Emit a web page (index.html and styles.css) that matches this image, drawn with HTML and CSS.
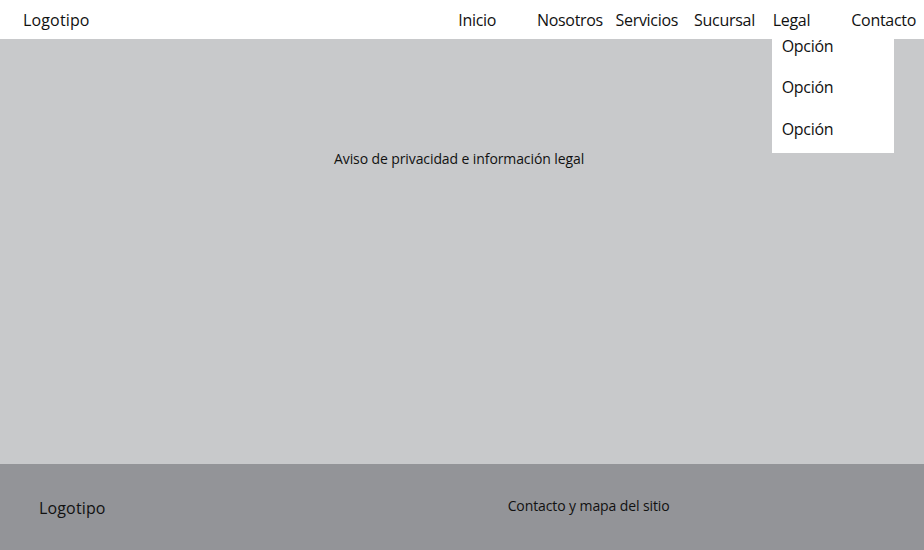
FILE: index.html
```html
<!DOCTYPE html>
<html lang="es">
<head>
<meta charset="utf-8">
<title>Legal</title>
<link rel="stylesheet" href="styles.css">
</head>
<body>
<header class="topbar">
  <div class="brand">Logotipo</div>
  <nav class="menu">
    <a class="menu-item" href="#">Inicio</a>
    <a class="menu-item" href="#">Nosotros</a>
    <a class="menu-item" href="#">Servicios</a>
    <a class="menu-item" href="#">Sucursal</a>
    <div class="menu-item has-sub">
      <a href="#">Legal</a>
      <ul class="submenu">
        <li><a href="#">Opción</a></li>
        <li><a href="#">Opción</a></li>
        <li><a href="#">Opción</a></li>
      </ul>
    </div>
    <a class="menu-item" href="#">Contacto</a>
  </nav>
</header>
<main class="content">
  <p class="notice">Aviso de privacidad e información legal</p>
</main>
<footer class="footer">
  <div class="footer-brand">Logotipo</div>
  <div class="footer-links">Contacto y mapa del sitio</div>
</footer>
</body>
</html>
```
FILE: styles.css
```css
* { box-sizing: border-box; }

html, body {
  margin: 0;
  padding: 0;
  height: 100%;
}

body {
  font-family: "Open Sans", "Noto Sans", sans-serif;
  color: #111;
  display: flex;
  flex-direction: column;
  height: 550px;
  overflow: hidden;
}

a { color: inherit; text-decoration: none; }

/* top navigation bar */
.topbar {
  height: 39px;
  background: #fff;
  display: flex;
  align-items: center;
  padding-left: 23px;
  position: relative;
  z-index: 2;
}

.brand {
  font-size: 16px;
  letter-spacing: 0.15px;
}

.menu {
  margin-left: auto;
  margin-right: 8px;
  display: grid;
  grid-template-columns: repeat(5, 78.6px) auto;
  font-size: 16px;
  letter-spacing: -0.3px;
}

.menu-item { white-space: nowrap; }

.has-sub { position: relative; }

.submenu {
  list-style: none;
  margin: 0;
  padding: 0 0 13px 10px;
  position: absolute;
  left: -1px;
  top: 26px;
  width: 122px;
  background: #fff;
  display: flex;
  flex-direction: column;
  gap: 19.5px;
}

.submenu li {
  line-height: 22px;
}

/* page body */
.content {
  flex: 1;
  background: #c8c9cb;
  padding: 110px 0 0 334px;
}

.notice {
  margin: 0;
  font-size: 14px;
  letter-spacing: -0.1px;
  line-height: 20px;
}

/* footer */
.footer {
  height: 86px;
  background: #939498;
  display: flex;
  align-items: flex-start;
  padding-left: 39px;
}

.footer-brand {
  font-size: 16px;
  letter-spacing: 0.15px;
  margin-top: 33px;
}

.footer-links {
  font-size: 14px;
  letter-spacing: -0.1px;
  margin-top: 32px;
  margin-left: 402px;
}
```
